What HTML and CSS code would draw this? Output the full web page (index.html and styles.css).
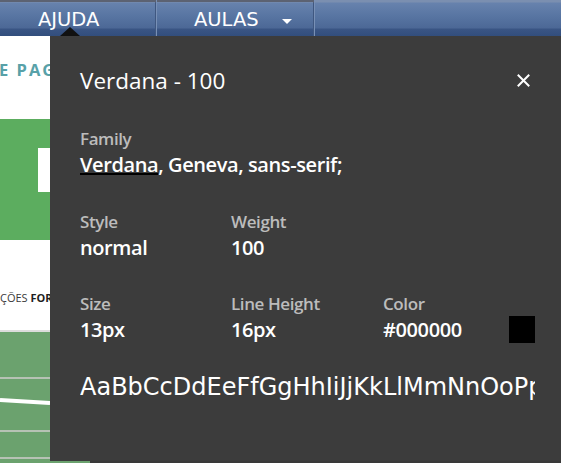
FILE: index.html
```html
<!DOCTYPE html>
<html lang="pt">
<head>
<meta charset="utf-8">
<title>Font inspector</title>
<link rel="stylesheet" href="styles.css">
</head>
<body>
<nav class="navbar">
  <div class="nav-item nav-first">AJUDA</div>
  <div class="nav-divider"></div>
  <div class="nav-item nav-second">AULAS <span class="caret"></span></div>
  <div class="nav-divider"></div>
  <div class="nav-rest"></div>
</nav>

<main class="page">
  <section class="page-head"><span class="page-title">E PAGINA</span></section>
  <section class="page-banner"><div class="banner-box"></div></section>
  <section class="page-info"><span class="info-text">ÇÕES <b>FORMAÇÃO</b></span></section>
  <section class="page-chart">
    <svg class="chart" width="90" height="127" viewBox="0 0 90 127">
      <line x1="0" y1="46" x2="90" y2="46" stroke="#b6c2b4" stroke-width="2"/>
      <line x1="0" y1="99" x2="90" y2="99" stroke="#b6c2b4" stroke-width="2"/>
      <line x1="0" y1="126" x2="90" y2="126" stroke="#b6c2b4" stroke-width="2"/>
      <line x1="0" y1="68" x2="50" y2="71" stroke="#ffffff" stroke-width="4"/>
    </svg>
  </section>
  <section class="page-foot"><div class="foot-green"></div><div class="foot-dark"></div></section>
</main>

<div class="arrow"></div>
<aside class="popover">
  <header class="pop-head">
    <h1 class="pop-title">Verdana - 100</h1>
    <svg class="close" width="13" height="13" viewBox="0 0 13 13">
      <path d="M1.5 1.5 L11.5 11.5 M11.5 1.5 L1.5 11.5" stroke="#ffffff" stroke-width="2" stroke-linecap="square"/>
    </svg>
  </header>
  <div class="pop-body">
    <div class="field field-family">
      <div class="label">Family</div>
      <div class="value"><span class="u">Verdana</span>, Geneva, sans-serif;</div>
    </div>
    <div class="grid">
      <div class="field">
        <div class="label">Style</div>
        <div class="value">normal</div>
      </div>
      <div class="field">
        <div class="label">Weight</div>
        <div class="value">100</div>
      </div>
      <div class="field"></div>
      <div class="field">
        <div class="label">Size</div>
        <div class="value">13px</div>
      </div>
      <div class="field">
        <div class="label">Line Height</div>
        <div class="value">16px</div>
      </div>
      <div class="field">
        <div class="label">Color</div>
        <div class="value color-row"><span>#000000</span><span class="swatch"></span></div>
      </div>
    </div>
    <div class="sample">AaBbCcDdEeFfGgHhIiJjKkLlMmNnOoPpQqRrSsTtUuVvWwXxYyZz</div>
  </div>
</aside>
</body>
</html>
```

FILE: styles.css
```css
html, body {
  margin: 0;
  padding: 0;
}
body {
  width: 561px;
  height: 465px;
  overflow: hidden;
  background: #ffffff;
  position: relative;
  font-family: "Open Sans", "Noto Sans", sans-serif;
}

/* nav */
.navbar {
  display: flex;
  height: 36px;
  background: linear-gradient(to bottom, #7b8fb0 0, #7b8fb0 2px, #6782ad 3px, #5875a2 16px, #4c6896 28px, #3a5584 29px, #324e7d 36px);
  font-family: "DejaVu Sans", Verdana, sans-serif;
  font-size: 19.5px;
  color: #ffffff;
}
.nav-item {
  box-sizing: border-box;
  height: 36px;
  padding-top: 5px;
  line-height: 30px;
  box-shadow: inset 0 2px #5c6272;
  display: flex;
  align-items: flex-start;
}
.nav-first {
  width: 155px;
  padding-left: 38px;
}
.nav-second {
  width: 156px;
  padding-left: 37px;
  white-space: pre;
}
.caret {
  width: 0;
  height: 0;
  border-left: 5.5px solid transparent;
  border-right: 5.5px solid transparent;
  border-top: 5px solid #ffffff;
  margin-left: 17px;
  margin-top: 14px;
}
.nav-divider {
  width: 1px;
  height: 36px;
  background: linear-gradient(to bottom, #5c6272 0, #5c6272 2px, #3f5780 3px, #3f5780 100%);
  border-right: 1px solid #7890b6;
  box-sizing: content-box;
}
.nav-rest {
  flex: 1;
}

/* page underneath */
.page {
  display: flex;
  flex-direction: column;
  width: 561px;
}
.page-head {
  height: 83px;
  overflow: hidden;
}
.page-title {
  display: block;
  margin: 22px 0 0 -1px;
  font-weight: 700;
  font-size: 16.5px;
  letter-spacing: 2px;
  color: #58a1a8;
  line-height: 24px;
  white-space: nowrap;
}
.page-banner {
  height: 121px;
  background: #5cad5f;
  padding-top: 29px;
  box-sizing: border-box;
}
.banner-box {
  margin-left: 38px;
  width: 40px;
  height: 44px;
  background: #ffffff;
}
.page-info {
  height: 92px;
  box-sizing: border-box;
  padding-top: 50px;
  border-bottom: 2px solid #dcdcdc;
}
.info-text {
  display: block;
  font-size: 11px;
  line-height: 16px;
  color: #3a3a3a;
  white-space: nowrap;
}
.info-text b {
  color: #1e1e1e;
}
.page-chart {
  height: 127px;
  background: #6ba26e;
}
.chart {
  display: block;
}
.page-foot {
  display: flex;
  height: 4px;
}
.foot-green {
  width: 90px;
  background: #6ba26e;
}
.foot-dark {
  flex: 1;
  background: #393939;
}

/* popover */
.arrow {
  position: absolute;
  left: 60px;
  top: 27px;
  width: 0;
  height: 0;
  border-left: 10px solid transparent;
  border-right: 10px solid transparent;
  border-bottom: 9px solid #111111;
}
.popover {
  position: absolute;
  left: 50px;
  top: 36px;
  width: 511px;
  height: 425px;
  box-sizing: border-box;
  padding: 0 26px 0 30px;
  background: #3c3c3c;
  color: #ffffff;
  overflow: hidden;
}
.pop-head {
  display: flex;
  justify-content: space-between;
  align-items: flex-start;
  height: 91px;
  box-sizing: border-box;
  padding-top: 29px;
}
.pop-title {
  margin: 0;
  font-size: 22.5px;
  font-weight: 400;
  line-height: 32px;
}
.close {
  margin-top: 9px;
  margin-right: 5px;
}
.pop-body {
  display: flex;
  flex-direction: column;
}
.label {
  font-size: 17px;
  font-weight: 600;
  letter-spacing: -0.4px;
  line-height: 24px;
  color: #bcbcbc;
}
.value {
  font-size: 20px;
  font-weight: 600;
  letter-spacing: -0.4px;
  line-height: 27px;
  color: #ffffff;
  white-space: nowrap;
}
.u {
  text-decoration: underline;
  text-decoration-color: #000000;
  text-underline-offset: 1px;
}
.grid {
  display: grid;
  grid-template-columns: 151px 152px 1fr;
  row-gap: 31px;
  margin-top: 32px;
}
.color-row {
  display: flex;
  justify-content: space-between;
  align-items: center;
}
.swatch {
  width: 26px;
  height: 27px;
  background: #000000;
}
.sample {
  margin-top: 29px;
  font-family: "DejaVu Sans", Verdana, sans-serif;
  font-size: 24px;
  line-height: 30px;
  white-space: nowrap;
  overflow: hidden;
}
```
